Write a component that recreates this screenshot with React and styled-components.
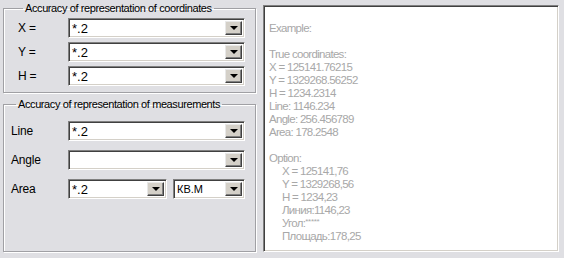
import React from "react";
import styled, { createGlobalStyle } from "styled-components";

const GlobalStyle = createGlobalStyle`
  body {
    margin: 0;
    background: #dfdfe3;
    font-family: "Liberation Sans", Arial, sans-serif;
    font-size: 12px;
  }
`;

const Page = styled.div`
  display: flex;
  width: 564px;
  height: 258px;
  padding: 2px 5px 6px 3px;
  box-sizing: border-box;
  gap: 7px;
`;

const LeftColumn = styled.div`
  display: flex;
  flex-direction: column;
  width: 253px;
  gap: 5px;
`;

const Group = styled.fieldset`
  margin: 0;
  padding: ${p => p.$pad || "2px 10px 6px 12px"};
  border: 1px solid #a0a0a4;
  box-shadow: 1px 1px 0 #fff, inset 1px 1px 0 #fff;
  flex: ${p => (p.$grow ? 1 : "none")};
  display: flex;
  flex-direction: column;
  gap: ${p => p.$gap || "4px"};
  min-width: 0;
`;

const Legend = styled.legend`
  padding: 0 2px;
  margin-left: 5px;
  color: #000;
  font-size: 11px;
  letter-spacing: -0.4px;
  line-height: 12px;
  white-space: nowrap;
`;

const Row = styled.div`
  display: flex;
  align-items: center;
  height: 20px;
`;

const Label = styled.span`
  width: ${p => p.$w || "49px"};
  color: #000;
  font-size: 12px;
  letter-spacing: -0.2px;
  flex: none;
`;

const Combo = styled.div`
  display: flex;
  align-items: stretch;
  width: ${p => p.$w || "177px"};
  height: 20px;
  box-sizing: border-box;
  background: #fff;
  border-style: solid;
  border-width: 1px;
  border-color: #808080 #fff #fff #808080;
  box-shadow: inset 1px 1px 0 #404040, inset -1px -1px 0 #d4d0c8;
  margin-left: ${p => p.$ml || "0"};
`;

const ComboText = styled.span`
  flex: 1;
  padding: 2px 0 0 3px;
  font-size: ${p => (p.$small ? "11px" : "13px")};
  line-height: 15px;
  color: #000;
  white-space: nowrap;
  overflow: hidden;
`;

const DropButton = styled.span`
  width: 17px;
  margin: 2px 2px 2px 0;
  background: #d4d0c8;
  box-sizing: border-box;
  border-style: solid;
  border-width: 1px;
  border-color: #e8e8e8 #404040 #404040 #e8e8e8;
  box-shadow: inset -1px -1px 0 #808080;
  display: flex;
  align-items: center;
  justify-content: center;
`;

const Arrow = styled.span`
  width: 0;
  height: 0;
  border-left: 4px solid transparent;
  border-right: 4px solid transparent;
  border-top: 4px solid #000;
`;

const ExamplePanel = styled.div`
  flex: 1;
  margin-top: 3px;
  background: #fff;
  box-sizing: border-box;
  border-style: solid;
  border-width: 1px;
  border-color: #808080 #fff #fff #808080;
  box-shadow: inset 1px 1px 0 #404040, inset -1px -1px 0 #d4d0c8;
  padding: 16px 0 0 5px;
  color: #a8a8a8;
  font-size: 11.5px;
  letter-spacing: -0.7px;
  line-height: 13px;
`;

const Line = styled.div`
  padding-left: ${p => (p.$indent ? "13px" : "0")};
  margin-top: ${p => (p.$gap ? "13px" : "0")};
  height: 13px;
  white-space: nowrap;
`;

const Stars = styled.span`
  font-size: 8px;
  line-height: 1;
  letter-spacing: -0.3px;
  vertical-align: 3px;
`;

const ComboBox = ({ value, width, ml, small }) => (
  <Combo $w={width} $ml={ml}>
    <ComboText $small={small}>{value}</ComboText>
    <DropButton>
      <Arrow />
    </DropButton>
  </Combo>
);

const App = () => (
  <>
    <GlobalStyle />
    <Page>
      <LeftColumn>
        <Group $pad="4px 10px 6px 14px" $gap="4px">
          <Legend>Accuracy of representation of coordinates</Legend>
          <Row><Label $w="50px">X =</Label><ComboBox value="*.2" /></Row>
          <Row><Label $w="50px">Y =</Label><ComboBox value="*.2" /></Row>
          <Row><Label $w="50px">H =</Label><ComboBox value="*.2" /></Row>
        </Group>
        <Group $grow $pad="11px 10px 6px 7px" $gap="9px">
          <Legend>Accuracy of representation of measurements</Legend>
          <Row><Label $w="57px">Line</Label><ComboBox value="*.2" /></Row>
          <Row><Label $w="57px">Angle</Label><ComboBox value="" /></Row>
          <Row>
            <Label $w="57px">Area</Label>
            <ComboBox value="*.2" width="99px" />
            <ComboBox value="КВ.М" width="72px" ml="6px" small />
          </Row>
        </Group>
      </LeftColumn>
      <ExamplePanel>
        <Line>Example:</Line>
        <Line $gap>True coordinates:</Line>
        <Line>X = 125141.76215</Line>
        <Line>Y = 1329268.56252</Line>
        <Line>H = 1234.2314</Line>
        <Line>Line: 1146.234</Line>
        <Line>Angle: 256.456789</Line>
        <Line>Area: 178.2548</Line>
        <Line $gap>Option:</Line>
        <Line $indent>X = 125141,76</Line>
        <Line $indent>Y = 1329268,56</Line>
        <Line $indent>H = 1234,23</Line>
        <Line $indent>Линия:1146,23</Line>
        <Line $indent>Угол:<Stars>*****</Stars></Line>
        <Line $indent>Площадь:178,25</Line>
      </ExamplePanel>
    </Page>
  </>
);

export default App;
